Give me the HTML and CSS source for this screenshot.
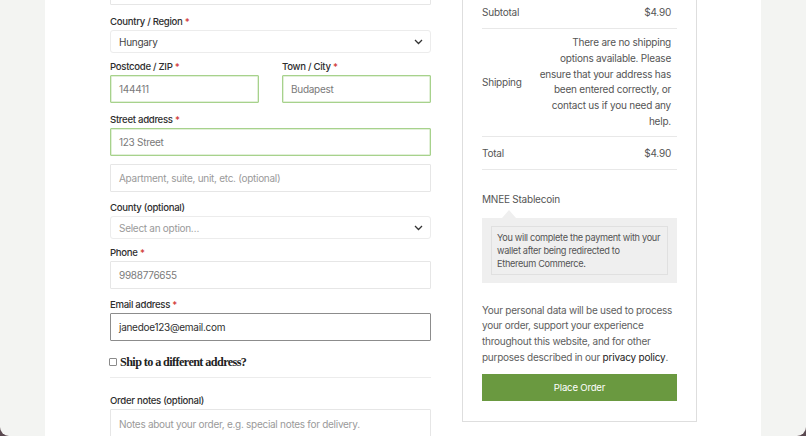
FILE: index.html
```html
<!DOCTYPE html>
<html lang="en">
<head>
<meta charset="utf-8">
<title>Checkout</title>
<link rel="stylesheet" href="styles.css">
</head>
<body>
<div class="page">
  <div class="panel">
    <form class="billing">
      <div class="control prev"></div>

      <div class="field field-select">
        <label class="label">Country / Region <span class="req">*</span></label>
        <div class="control select"><span class="val">Hungary</span>
          <svg class="chev" width="9" height="6" viewBox="0 0 9 6"><path d="M1 1l3.5 3.5L8 1" fill="none" stroke="#333" stroke-width="1.3"/></svg>
        </div>
      </div>

      <div class="row2">
        <div class="field">
          <label class="label">Postcode / ZIP <span class="req">*</span></label>
          <div class="control valid"><span class="val muted">144411</span></div>
        </div>
        <div class="field">
          <label class="label">Town / City <span class="req">*</span></label>
          <div class="control valid"><span class="val muted">Budapest</span></div>
        </div>
      </div>

      <div class="field field-tight">
        <label class="label">Street address <span class="req">*</span></label>
        <div class="control valid"><span class="val muted">123 Street</span></div>
      </div>

      <div class="field">
        <div class="control"><span class="val ph">Apartment, suite, unit, etc. (optional)</span></div>
      </div>

      <div class="field field-select">
        <label class="label">County (optional)</label>
        <div class="control select"><span class="val ph">Select an option…</span>
          <svg class="chev" width="9" height="6" viewBox="0 0 9 6"><path d="M1 1l3.5 3.5L8 1" fill="none" stroke="#333" stroke-width="1.3"/></svg>
        </div>
      </div>

      <div class="field">
        <label class="label">Phone <span class="req">*</span></label>
        <div class="control"><span class="val muted">9988776655</span></div>
      </div>

      <div class="field">
        <label class="label">Email address <span class="req">*</span></label>
        <div class="control focus"><span class="val dark">janedoe123@email.com</span></div>
      </div>

      <h3 class="ship"><span class="checkbox"></span>Ship to a different address?</h3>
      <div class="divider"></div>

      <div class="field">
        <label class="label">Order notes (optional)</label>
        <div class="control notes"><span class="val ph">Notes about your order, e.g. special notes for delivery.</span></div>
      </div>
    </form>

    <aside class="summary">
      <div class="srow"><span>Subtotal</span><span>$4.90</span></div>
      <div class="srow ship-row">
        <span>Shipping</span>
        <span class="ship-msg">There are no shipping<br>options available. Please<br>ensure that your address has<br>been entered correctly, or<br>contact us if you need any<br>help.</span>
      </div>
      <div class="srow"><span>Total</span><span>$4.90</span></div>

      <div class="method">MNEE Stablecoin</div>
      <div class="paybox">
        <div class="paynote">You will complete the payment with your<br>wallet after being redirected to<br>Ethereum Commerce.</div>
      </div>

      <p class="privacy">Your personal data will be used to process your order, support your experience throughout this website, and for other purposes described in our <a class="plink">privacy policy</a>.</p>

      <button class="order" type="button">Place Order</button>
    </aside>
  </div>
</div>
</body>
</html>
```

FILE: styles.css
```css
html {
  margin: 0;
  background: #5a4950;
}
body {
  margin: 0;
  height: 436px;
  overflow: hidden;
  background: #f3f4f2;
  border-radius: 0 0 9px 9px;
  font-family: Inter, "DejaVu Sans", sans-serif;
}
.page {
  display: flex;
  justify-content: flex-start;
  padding-left: 45px;
  height: 100%;
}
.panel {
  width: 716px;
  height: 100%;
  background: #fff;
  display: flex;
  align-items: flex-start;
  padding-left: 65px;
  box-sizing: border-box;
  gap: 31px;
  overflow: hidden;
}
.billing {
  width: 321px;
  display: flex;
  flex-direction: column;
  margin: 0;
}
.control {
  box-sizing: border-box;
  height: 28px;
  border: 1px solid #e6e6e6;
  border-radius: 1px;
  display: flex;
  align-items: center;
  padding: 0 8px;
  font-size: 10px;
  letter-spacing: -0.28px;
  color: #444;
  background: #fff;
}
.control.prev {
  margin-top: -23px;
}
.control.select {
  height: 23px;
  justify-content: space-between;
  border-radius: 3px;
  border-color: #ececec;
  padding-right: 7px;
}
.control.valid {
  border: 1px solid #a7d28c;
  box-shadow: inset 0 0 0 0.5px #c6e2b3;
}
.control.focus {
  border: 1px solid #8c8c8c;
}
.control.notes {
  height: 40px;
  align-items: flex-start;
  padding-top: 8px;
}
.val { white-space: nowrap; }
.muted { color: #7a7a7a; }
.ph { color: #9a9a9a; }
.dark { color: #2f2f2f; }
.chev { display: block; }

.field {
  display: flex;
  flex-direction: column;
  margin-top: 8px;
}
.field-select + .row2 .field,
.field-select + .field {
  margin-top: 6px;
}
.field-tight { margin-top: 9px; }
.billing > .field:nth-child(2) { margin-top: 9px; }
.label {
  font-size: 9.6px;
  line-height: 14px;
  padding-top: 1px;
  font-weight: 500;
  letter-spacing: -0.3px;
  color: #2e2e2e;
  margin-bottom: 1px;
}
.req { color: #d0312d; }
.row2 {
  display: grid;
  grid-template-columns: 149px 149px;
  justify-content: space-between;
}

.ship {
  margin: 14px 0 0 -1px;
  display: flex;
  align-items: center;
  gap: 3px;
  font-family: "Liberation Serif", "DejaVu Serif", serif;
  font-weight: 700;
  font-size: 12.2px;
  line-height: 14px;
  color: #222;
  letter-spacing: -0.6px;
}
.checkbox {
  width: 6px;
  height: 6px;
  border: 1px solid #8a8a8a;
  border-radius: 1px;
  background: #fff;
}
.divider {
  height: 1px;
  background: #ececec;
  margin-top: 8px;
}
.billing > .divider + .field { margin-top: 15px; }

.summary {
  width: 235px;
  box-sizing: border-box;
  border: 1px solid #dedede;
  border-top: none;
  padding: 0 19px 20px 19px;
  font-size: 10px;
  letter-spacing: -0.22px;
  color: #555;
}
.srow {
  display: flex;
  justify-content: space-between;
  align-items: center;
  line-height: 16px;
  padding: 8px 6px 8px 0;
  border-bottom: 1px solid #e8e8e8;
}
.summary .srow:first-child { padding-top: 4px; }
.ship-row {
  padding-top: 6px;
  padding-bottom: 6px;
}
.ship-msg {
  text-align: right;
  line-height: 15.8px;
  white-space: nowrap;
}
.method {
  margin-top: 21px;
  line-height: 16px;
  color: #555;
}
.paybox {
  position: relative;
  margin-top: 11px;
  background: #efefef;
  padding: 8px 9px;
}
.paybox::before {
  content: "";
  position: absolute;
  left: 20px;
  top: -8px;
  border-left: 7px solid transparent;
  border-right: 7px solid transparent;
  border-bottom: 8px solid #efefef;
}
.paynote {
  border: 1px solid #e0e0e0;
  padding: 4px 5px;
  font-size: 9.2px;
  letter-spacing: -0.32px;
  line-height: 13px;
  color: #555;
  white-space: nowrap;
}
.privacy {
  margin: 20px 0 0;
  font-size: 10px;
  letter-spacing: -0.25px;
  line-height: 15.6px;
  color: #5e5e5e;
}
.plink { color: #222; letter-spacing: -0.2px; }
.order {
  display: block;
  width: 100%;
  height: 27px;
  margin-top: 9px;
  border: none;
  background: #6a9940;
  color: #fff;
  font-family: inherit;
  font-size: 9.6px;
  letter-spacing: -0.2px;
}
```
